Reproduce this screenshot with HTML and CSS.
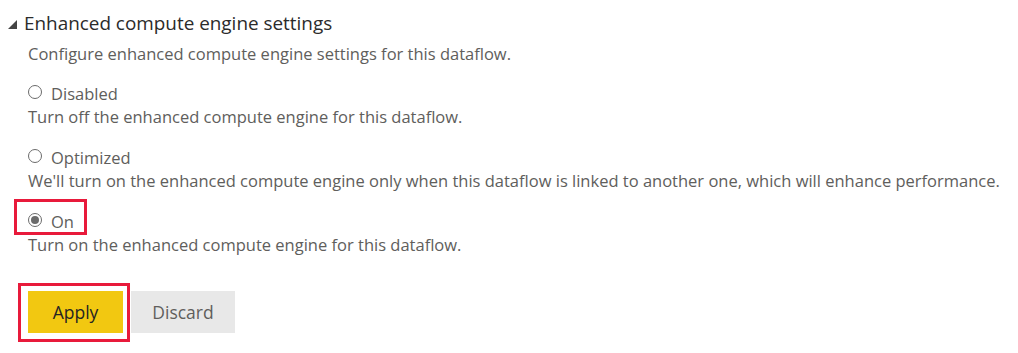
FILE: index.html
```html
<!DOCTYPE html>
<html>
<head>
<meta charset="utf-8">
<link rel="stylesheet" href="styles.css">
</head>
<body>
<div class="panel">
  <div class="header">
    <svg class="caret" width="9" height="9" viewBox="0 0 9 9"><polygon points="9,0 9,9 0,9" fill="#444"/></svg>
    <span class="title">Enhanced compute engine settings</span>
  </div>
  <div class="body">
    <p class="desc">Configure enhanced compute engine settings for this dataflow.</p>
    <div class="option">
      <label class="radio-row"><span class="radio"></span><span class="label">Disabled</span></label>
      <p class="help">Turn off the enhanced compute engine for this dataflow.</p>
    </div>
    <div class="option">
      <label class="radio-row"><span class="radio"></span><span class="label">Optimized</span></label>
      <p class="help">We'll turn on the enhanced compute engine only when this dataflow is linked to another one, which will enhance performance.</p>
    </div>
    <div class="option">
      <label class="radio-row highlight"><span class="radio checked"></span><span class="label">On</span></label>
      <p class="help">Turn on the enhanced compute engine for this dataflow.</p>
    </div>
  </div>
  <div class="actions">
    <div class="apply-wrap"><button class="btn primary">Apply</button></div>
    <button class="btn secondary">Discard</button>
  </div>
</div>
</body>
</html>
```
FILE: styles.css
```css
html, body {
  margin: 0;
  padding: 0;
  background: #ffffff;
}
body {
  font-family: "Open Sans", "Noto Sans", sans-serif;
  color: #444;
}
.panel {
  padding: 10px 0 0 8px;
}
.header {
  display: flex;
  align-items: center;
  height: 26px;
}
.caret {
  margin-right: 7px;
  margin-top: 2px;
}
.title {
  font-size: 18.9px;
  color: #2b2b2b;
}
.body {
  padding-left: 20px;
}
.desc, .help {
  margin: 0;
  font-size: 16.5px;
  line-height: 24px;
  color: #605e5c;
  white-space: nowrap;
}
.desc {
  margin-top: 6px;
  margin-bottom: 15px;
}
.option {
  margin-bottom: 16px;
}
.radio-row {
  display: flex;
  align-items: center;
  height: 24px;
  position: relative;
  width: max-content;
}
.radio {
  width: 14px;
  height: 14px;
  border: 1px solid #6b6b6b;
  border-radius: 50%;
  margin-right: 9px;
  box-sizing: border-box;
  position: relative;
  margin-top: -2px;
}
.radio.checked::after {
  content: "";
  position: absolute;
  left: 2px;
  top: 2px;
  width: 8px;
  height: 8px;
  border-radius: 50%;
  background: #6b6b6b;
}
.label {
  font-size: 16.5px;
  color: #605e5c;
}
.highlight::before {
  content: "";
  position: absolute;
  left: -14px;
  top: -10px;
  width: 73px;
  height: 36px;
  border: 3px solid #e81a3b;
  box-sizing: border-box;
  pointer-events: none;
}
.actions {
  display: flex;
  align-items: flex-start;
  margin-top: 26px;
  padding-left: 10px;
  gap: 1px;
}
.apply-wrap {
  border: 3px solid #e81a3b;
  padding: 5px 4px 6px 7px;
  display: flex;
}
.btn {
  border: none;
  height: 42px;
  font-family: inherit;
  font-size: 17.5px;
  padding: 0;
}
.primary {
  width: 95px;
  background: #f2c811;
  color: #252423;
}
.secondary {
  width: 104px;
  margin-top: 8px;
  background: #e8e8e8;
  color: #605e5c;
}
```
